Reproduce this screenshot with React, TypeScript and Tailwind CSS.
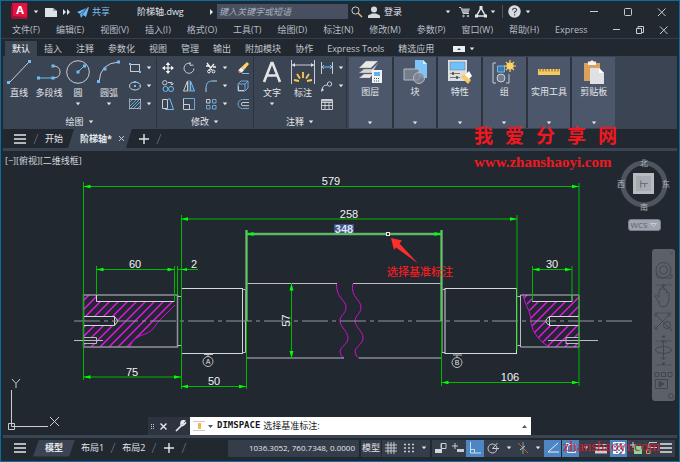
import type { ReactNode } from "react";

const menus = ["文件(F)", "编辑(E)", "视图(V)", "插入(I)", "格式(O)", "工具(T)", "绘图(D)", "标注(N)", "修改(M)", "参数(P)", "窗口(W)", "帮助(H)", "Express"];
const ribbonTabs = ["默认", "插入", "注释", "参数化", "视图", "管理", "输出", "附加模块", "协作", "Express Tools", "精选应用"];

function Icon({ size = 12, children }: { size?: number; children: ReactNode }) {
  return (
    <svg width={size} height={size} viewBox={`0 0 ${size} ${size}`} fill="none" stroke="#c9cdd3" className="block shrink-0" aria-hidden="true">
      {children}
    </svg>
  );
}

function Caret() {
  return (
    <svg width="6" height="4" viewBox="0 0 6 4" className="block shrink-0" aria-hidden="true">
      <path d="M0.8 0.5h4.4L3 3.3z" fill="#e6e8eb" />
    </svg>
  );
}

function Burger() {
  return (
    <Icon size={14}>
      <path d="M1 3h12M1 7h12M1 11h12" stroke="#e4e6e9" strokeWidth="1.4" />
    </Icon>
  );
}

function Plus() {
  return (
    <Icon size={12}>
      <path d="M6 1v10M1 6h10" stroke="#e4e6e9" strokeWidth="1.4" />
    </Icon>
  );
}

function Slash() {
  return (
    <Icon size={10}>
      <path d="M7 0L3 10" stroke="#59616f" />
    </Icon>
  );
}

function TitleBar() {
  return (
    <header className="flex h-[21px] items-center pl-[10px] text-[9px] text-[#e3e6ea]">
      <button aria-label="AutoCAD" className="flex items-center gap-[4px]">
        <svg width="18" height="17" viewBox="0 0 18 17" aria-hidden="true">
          <path d="M1 0h15v14H1z" fill="#e5123f" />
          <path d="M0 3l2-2v12l14 1v2H2l-2-1z" fill="#9e1239" />
          <path d="M16 0l1 3v13h-1z" fill="#7a0f30" />
          <text x="9" y="11" textAnchor="middle" fontSize="11" fontWeight="700" fill="#fff" fontFamily="Inter, sans-serif">A</text>
        </svg>
        <Caret />
      </button>
      <button aria-label="新建" className="ml-[6px]">
        <Icon>
          <path d="M0 2h8l4 3v6H0z" fill="#dfe1e4" stroke="none" />
          <path d="M8 2v3h4z" fill="#9da2aa" stroke="none" />
        </Icon>
      </button>
      <button aria-label="更多" className="ml-[6px]">
        <Icon size={8}>
          <path d="M0 1l3 3-3 3zM4 1l3 3-3 3z" fill="#e4e6e9" stroke="none" />
        </Icon>
      </button>
      <button className="ml-[6px] flex items-center gap-[3px] text-[#7fc0ec]">
        <Icon>
          <path d="M0 6L12 1l-3 10-3-2-2 3-1-4z" fill="#6bbcf2" stroke="none" />
          <path d="M3 8l7-6-5 7" stroke="#1f3d58" strokeWidth="0.7" />
        </Icon>
        共享
      </button>
      <h1 className="ml-[27px] w-[68px]">阶梯轴.dwg</h1>
      <Icon size={8}>
        <path d="M5 1l3 3-3 3z" fill="#e4e6e9" stroke="none" />
      </Icon>
      <input
        aria-label="搜索"
        placeholder="键入关键字或短语"
        className="ml-[4px] h-[15px] w-[131px] bg-[#474f61] px-[2px] italic placeholder:text-[#a9afba]"
      />
      <button aria-label="查找" className="ml-[3px]">
        <Icon>
          <circle cx="4.5" cy="4.5" r="3.6" />
          <path d="M7.2 7.2L11 11" strokeWidth="1.6" stroke="#d9b46b" />
        </Icon>
      </button>
      <button className="ml-[5px] flex items-center gap-[4px]">
        <Icon>
          <circle cx="6" cy="3.6" r="3" fill="#d7dadd" stroke="none" />
          <path d="M0 12V9.5L4 7.5h4l4 2V12z" fill="#d7dadd" stroke="none" />
        </Icon>
        登录
      </button>
      <div className="ml-[43px] flex items-center">
        <Caret />
        <button aria-label="商店" className="ml-[8px]">
          <Icon>
            <path d="M0 1.5h2l2 6h6" />
            <path d="M2.5 2.5H11L9.5 7H4z" fill="#a3a7ad" stroke="none" />
            <circle cx="4.5" cy="10" r="0.8" /><circle cx="9" cy="10" r="0.8" />
          </Icon>
        </button>
        <button aria-label="应用" className="mr-[3px] ml-[4px] flex items-center gap-[3px]">
          <Icon>
            <path d="M6 2L1.5 10h9z" stroke="#e4e6e9" strokeWidth="1.5" />
            <path d="M4.5 0h3v3h-3zM0 8.5h3v3H0zM9 8.5h3v3H9z" fill="#e4e6e9" stroke="none" />
          </Icon>
          <Caret />
        </button>
      </div>
      <div className="ml-[3px] h-[13px] w-px bg-[#4b5362]" />
      <button aria-label="帮助" className="ml-[5px] flex items-center gap-[4px]">
        <svg width="13" height="13" viewBox="0 0 13 13" aria-hidden="true">
          <circle cx="6.5" cy="6.5" r="6.2" fill="#d9dbde" />
          <path d="M4.6 5.2q0-2 2-2t2 1.8q0 1-2 2.2v1M6.6 9.2v1.2" fill="none" stroke="#39414e" strokeWidth="1.1" />
        </svg>
        <Caret />
      </button>
      <div className="mr-[12px] ml-auto flex items-center gap-[24px]">
        <button aria-label="最小化"><Icon size={10}><path d="M1 4.5h8" /></Icon></button>
        <button aria-label="最大化"><Icon size={10}><rect x="1.5" y="1.5" width="7" height="7" rx="1" /></Icon></button>
        <button aria-label="关闭"><Icon size={10}><path d="M1 1.5l7.5 7.5M8.5 1.5L1 9" /></Icon></button>
      </div>
    </header>
  );
}

function MenuBar() {
  return (
    <nav className="flex h-[17px] items-center gap-[16px] border-b border-[#363e4a] pl-[11px] text-[9px] text-[#b9bec6]">
      {menus.map((menu) => (
        <button key={menu} className="shrink-0">{menu}</button>
      ))}
      <div className="mr-[10px] ml-auto flex items-center gap-[14px]">
        <button aria-label="最小化文档"><Icon size={10}><path d="M2 4.5h7" /></Icon></button>
        <button aria-label="还原文档"><Icon size={10}><path d="M1.5 3.5h5v5h-5zM3 3.5v-2h5.5v6h-2" /></Icon></button>
        <button aria-label="关闭文档"><Icon size={10}><path d="M1 1.5l7.5 7.5M8.5 1.5L1 9" /></Icon></button>
      </div>
    </nav>
  );
}

function RibbonTabs() {
  return (
    <nav className="flex h-[17px] items-end pl-[4px] text-[9px] text-[#c3c7ce]">
      {ribbonTabs.map((tab, i) => (
        <button key={tab} className={i === 0 ? "h-[15px] shrink-0 bg-[#3b4453] px-[7px] text-white" : "h-[15px] shrink-0 px-[7px]"}>
          {tab}
        </button>
      ))}
      <button aria-label="最小化功能区" className="ml-[12px] flex h-[15px] items-center gap-[4px]">
        <svg width="12" height="6" viewBox="0 0 12 6" aria-hidden="true">
          <path d="M0 0h12v6H0z" fill="#eceef0" />
          <path d="M4 4l2-2 2 2z" fill="#3b4453" />
        </svg>
        <Caret />
      </button>
    </nav>
  );
}

function BigTool({ label, icon, caret, width }: { label: string; icon: ReactNode; caret?: boolean; width: string }) {
  return (
    <button className={`flex shrink-0 flex-col items-center pt-[3px] ${width}`}>
      {icon}
      <span className="mt-[3px] mb-[3px] h-[12px] leading-[12px] whitespace-nowrap">{label}</span>
      {caret && <Caret />}
    </button>
  );
}

function SmallTool({ label, caret, children }: { label: string; caret?: boolean; children: ReactNode }) {
  return (
    <button aria-label={label} className="flex h-[18px] items-center justify-center gap-[5px]">
      <Icon>{children}</Icon>
      {caret && <Caret />}
    </button>
  );
}

function Panel({ title, className, children }: { title: string; className: string; children: ReactNode }) {
  return (
    <section className={`flex shrink-0 flex-col border-r border-[#2c333f] ${className}`}>
      <div className="flex h-[58px] items-start">{children}</div>
      <button className="flex h-[13px] items-center justify-center gap-[4px] leading-[13px]">
        {title}
        <Caret />
      </button>
    </section>
  );
}

function DrawPanel() {
  return (
    <Panel title="绘图" className="w-[154px]">
      <BigTool
        label="直线"
        width="w-[32px]"
        icon={
          <Icon size={24}>
            <path d="M2 23L22 2" />
            <path d="M0 21h3v3H0zM21 0h3v3h-3z" fill="#6fbdf5" stroke="none" />
          </Icon>
        }
      />
      <BigTool
        label="多段线"
        width="w-[28px]"
        icon={
          <Icon size={24}>
            <path d="M2 18h14" stroke="#6fbdf5" />
            <path d="M16 18q7 0 7-6t-7-6" />
            <path d="M0 16.500h3v3H0zM14.500 16.500h3v3h-3zM14.500 4.500h3v3h-3z" fill="#6fbdf5" stroke="none" />
          </Icon>
        }
      />
      <BigTool
        label="圆"
        width="w-[30px]"
        caret
        icon={
          <Icon size={24}>
            <circle cx="12" cy="12" r="11.3" />
            <path d="M12 12l6-6" stroke="#6fbdf5" />
            <path d="M10.500 10.500h3v3h-3zM17 4.500h3v3h-3z" fill="#6fbdf5" stroke="none" />
          </Icon>
        }
      />
      <BigTool
        label="圆弧"
        width="w-[32px]"
        caret
        icon={
          <Icon size={24}>
            <path d="M2 22Q3 3 22 2" />
            <path d="M0 20h3v3H0zM6.500 7.500h3v3h-3zM20 0.500h3v3h-3z" fill="#6fbdf5" stroke="none" />
          </Icon>
        }
      />
      <div className="flex flex-col pt-[2px] pl-[4px]">
        <SmallTool label="矩形" caret>
          <rect x="1.500" y="2.500" width="9" height="7" />
          <path d="M0 1h2v2H0zM10 9h2v2h-2z" fill="#6fbdf5" stroke="none" />
        </SmallTool>
        <SmallTool label="椭圆" caret>
          <ellipse cx="6" cy="6" rx="5.5" ry="4" />
          <path d="M5 5h2v2H5zM5 1h2v2H5zM10.500 5H12v2h-1.500z" fill="#6fbdf5" stroke="none" />
        </SmallTool>
        <SmallTool label="图案填充" caret>
          <path d="M1 4l3-3M1 8l7-7M1 11L11 1M4 11l7-7M8 11l3-3" stroke="#6fbdf5" strokeWidth="0.8" />
          <path d="M0.500 0.500v11M11.500 0.500v11M0.500 1.500h11M0.500 10.500h11" strokeWidth="0.7" />
        </SmallTool>
      </div>
    </Panel>
  );
}

function ModifyPanel() {
  return (
    <Panel title="修改" className="w-[97px]">
      <div className="grid grid-cols-[21px_22px_33px_19px] pt-[2px]">
        <SmallTool label="移动">
          <path d="M6 1v10M1 6h10" stroke="#f2f3f5" strokeWidth="1.2" />
          <path d="M6 0l2.300 3H3.700zM6 12l2.300-3H3.700zM0 6l3-2.300v4.600zM12 6L9 3.700v4.600z" fill="#f2f3f5" stroke="none" />
        </SmallTool>
        <SmallTool label="旋转">
          <path d="M7.500 1.500A5 5 0 1 0 11 6.500M7 0v3.200h3.500" />
        </SmallTool>
        <SmallTool label="修剪" caret>
          <path d="M2 1l5 7M9 2L4 8M1 4h4M8 5h3" stroke="#f2f3f5" strokeWidth="1.300" />
          <circle cx="4" cy="9.500" r="1.400" stroke="#f2f3f5" /><circle cx="8.500" cy="9.500" r="1.400" stroke="#f2f3f5" />
        </SmallTool>
        <SmallTool label="删除">
          <path d="M10 0l2 2-5 6-3-2.500z" fill="#ffd06b" stroke="none" />
          <path d="M4 5.500L7 8l-2 2.500H2L1.500 8z" fill="#f4f4f4" stroke="none" />
          <path d="M1.500 8l3 2.500H2z" fill="#ef6a4a" stroke="none" />
          <path d="M5 11.500h7" stroke="#6fbdf5" />
        </SmallTool>
        <SmallTool label="复制">
          <circle cx="2.800" cy="2.800" r="2.200" /><circle cx="3.500" cy="9" r="2.500" stroke="#6fbdf5" /><circle cx="9" cy="9" r="2.500" stroke="#6fbdf5" />
          <path d="M6 2.500h4v2M8.500 3.500L10 5l1.500-1.500" />
        </SmallTool>
        <SmallTool label="镜像">
          <path d="M4.500 1v10h-4z" /><path d="M7.500 1v10h4z" stroke="#6fbdf5" fill="#385f80" />
          <path d="M6 0v12" strokeWidth="0.6" />
        </SmallTool>
        <SmallTool label="圆角" caret>
          <path d="M1 12V8M7 1h5" /><path d="M1 8q0-7 6-7" stroke="#6fbdf5" />
        </SmallTool>
        <SmallTool label="分解">
          <path d="M1 4h7v7H1zM1 4l3-3h7v7l-3 3M8 4l3-3" stroke="#6fa9d6" />
          <path d="M1.500 6v4.500H7" />
        </SmallTool>
        <SmallTool label="拉伸">
          <path d="M0.500 1.500h5v9h-5z" /><path d="M6 1l2 0 3.500 10.500H3" stroke="#6fbdf5" />
        </SmallTool>
        <SmallTool label="缩放">
          <path d="M0.500 0.500h11v11h-5" stroke="#6fa9d6" /><path d="M0.500 0.500v11h6v-5h-6" />
        </SmallTool>
        <SmallTool label="阵列" caret>
          <path d="M1.500 1.500h3.500v3.500H1.500z" /><path d="M7.500 1.500H11v3.500H7.500zM1.500 7.500H5V11H1.500zM7.500 7.500H11V11H7.500z" stroke="#6fa9d6" />
        </SmallTool>
        <SmallTool label="偏移">
          <path d="M12 1.500H5.500a4.500 4.500 0 0 0 0 9H12" stroke="#6fa9d6" /><path d="M12 4.500H6a1.600 1.600 0 0 0 0 3.200h6" />
        </SmallTool>
      </div>
    </Panel>
  );
}

function AnnotatePanel() {
  return (
    <Panel title="注释" className="w-[93px]">
      <BigTool
        label="文字"
        width="w-[36px]"
        caret
        icon={
          <Icon size={24}>
            <path d="M4 22l7.500-19h1L20 22M6.500 15.500h11" stroke="#e3e4e6" strokeWidth="2.600" />
          </Icon>
        }
      />
      <BigTool
        label="标注"
        width="w-[26px]"
        icon={
          <Icon size={24}>
            <path d="M0.500 0v24M23.500 0v24M1 5h22" />
            <path d="M1 5l3-2v4zM23 5l-3-2v4z" fill="#dcdfe3" stroke="none" />
            <path d="M12 12v6M6 14l3 4.500M18 14l-3 4.500M3 20l5 1M21 20l-5 1" stroke="#ffc94f" strokeWidth="1.800" />
          </Icon>
        }
      />
      <div className="flex flex-col items-start pt-[2px] pl-[5px]">
        <SmallTool label="线性" caret>
          <path d="M0.500 0v12M11.500 0v12" /><path d="M1 5h10M3 3L1 5l2 2M9 3l2 2-2 2" stroke="#6fbdf5" />
        </SmallTool>
        <SmallTool label="引线" caret>
          <path d="M1 11q0-6 5-6" /><circle cx="8.500" cy="4" r="2.200" /><path d="M0 12l1-4 2 2z" fill="#dcdfe3" stroke="none" />
        </SmallTool>
        <SmallTool label="表格">
          <path d="M0.500 1.500h11v10h-11zM0.500 4.500h11M0.500 7.500h11M4 4.500v7M8 4.500v7" />
          <path d="M1 2h10v1.500H1z" fill="#c9cdd3" stroke="none" />
        </SmallTool>
      </div>
    </Panel>
  );
}

const panelCards = [
  {
    name: "图层",
    icon: (
      <Icon size={24}>
        <path d="M1 8L8 1h12l-7 7z" fill="#e8e8e8" stroke="#777" strokeWidth="0.400" />
        <path d="M1 13l5-4h8l6-6-6 10z" fill="#d6d6d6" stroke="#777" strokeWidth="0.400" />
        <path d="M1 18l5-4h9l-3 4z" fill="#e8e8e8" stroke="#777" strokeWidth="0.400" />
        <path d="M14 10h10v13H14z" fill="#f2f2f2" stroke="none" />
        <path d="M16 12h6v4h-6z" fill="#5ab2f0" stroke="none" />
        <path d="M16 18.500h6M16 21h6" stroke="#555" strokeDasharray="1 1" />
      </Icon>
    ),
  },
  {
    name: "块",
    icon: (
      <Icon size={24}>
        <path d="M12 0h8l4 4v14H12z" fill="#7cc5f8" stroke="none" />
        <path d="M20 0v4h4z" fill="#d8edfb" stroke="none" />
        <path d="M1 9h15v11H1z" fill="#747d8b" stroke="#b4bac3" />
        <circle cx="16" cy="18" r="5.500" fill="#7f8795" fillOpacity="0.8" stroke="#b4bac3" />
      </Icon>
    ),
  },
  {
    name: "特性",
    icon: (
      <Icon size={24}>
        <path d="M0 0h19v21H0z" fill="#dedede" stroke="none" />
        <path d="M2 2h15v8H2z" fill="#6ec1fa" stroke="#777" strokeWidth="0.500" />
        <path d="M2 13.500h10M2 17.500h10" stroke="#777" />
        <path d="M5 12v3M9 16v3" stroke="#444" strokeWidth="1.500" />
        <path d="M13 17l3-3 7 6-3 4z" fill="#f8c965" stroke="none" />
        <path d="M17 15l4-4 3 5-3 3z" fill="#fff" stroke="none" />
      </Icon>
    ),
  },
  {
    name: "组",
    icon: (
      <Icon size={24}>
        <path d="M4 3H1v20h3M14 23h3v-9" />
        <path d="M5.500 6h7v6h-7z" fill="#3f79a5" stroke="#70b7e8" />
        <circle cx="9" cy="18" r="4" fill="#747d8b" />
        <circle cx="18" cy="6" r="3.600" fill="#ffd364" stroke="none" />
        <path d="M18 0v12M12 6h12M14 2l8 8M22 2l-8 8" stroke="#ffd364" strokeWidth="1.200" />
      </Icon>
    ),
  },
  {
    name: "实用工具",
    icon: (
      <Icon size={24}>
        <path d="M1 9h22v6H1z" fill="#f6c862" stroke="none" />
        <path d="M3 9v2.500M6 9v2.500M9 9v2.500M12 9v2.500M15 9v2.500M18 9v2.500M21 9v2.500" stroke="#59482b" strokeWidth="0.800" />
      </Icon>
    ),
  },
  {
    name: "剪贴板",
    icon: (
      <Icon size={24}>
        <path d="M2 3h16v18H2z" fill="#d9a15b" stroke="none" />
        <path d="M6 1.500h2.500q1.500-2.500 3 0H14V5H6z" fill="#f4f4f4" stroke="none" />
        <path d="M8 8h9l5 5v11H8z" fill="#e0e1e3" stroke="none" />
        <path d="M17 8v5h5z" fill="#fff" stroke="none" />
      </Icon>
    ),
  },
];

function Ribbon() {
  return (
    <div className="mx-[2px] flex h-[73px] bg-[#3b4453] pt-px pb-px text-[9px] text-[#e3e6ea]">
      <DrawPanel />
      <ModifyPanel />
      <AnnotatePanel />
      <div className="ml-[2px] grid w-[266px] grid-cols-6 gap-[2px] bg-[#2c333f]">
        {panelCards.map((card) => (
          <button key={card.name} className="flex flex-col items-center bg-[#4c576b] pt-[3px] pb-[3px]">
            {card.icon}
            <span className="mt-[2px] leading-[12px] whitespace-nowrap">{card.name}</span>
            <span className="mt-auto"><Caret /></span>
          </button>
        ))}
      </div>
    </div>
  );
}

function DocumentTabs() {
  return (
    <nav className="flex h-[19px] items-center pl-[12px] text-[9px] text-[#e3e6ea]">
      <button aria-label="菜单"><Burger /></button>
      <span className="ml-[4px]"><Slash /></span>
      <button className="ml-[4px]">开始</button>
      <div className="ml-[5px] flex h-full items-center gap-[6px] bg-[#3b4453] pr-[7px] pl-[12px] font-bold [clip-path:polygon(6px_0,100%_0,calc(100%-6px)_100%,0_100%)]">
        <button>阶梯轴*</button>
        <button aria-label="关闭阶梯轴"><Icon size={7}><path d="M1 1l5 5M6 1L1 6" /></Icon></button>
      </div>
      <button aria-label="新图形" className="ml-[6px]"><Plus /></button>
      <span className="ml-[4px]"><Slash /></span>
    </nav>
  );
}

type Dim = { x1: number; x2: number; y: number; text: string; tx: number };
const dims: Dim[] = [
  { x1: 83.5, x2: 579, y: 186.5, text: "579", tx: 331 },
  { x1: 181, x2: 517, y: 219, text: "258", tx: 349 },
  { x1: 96.5, x2: 174.5, y: 269.5, text: "60", tx: 135 },
  { x1: 532.5, x2: 572, y: 269.5, text: "30", tx: 552 },
  { x1: 83.5, x2: 181, y: 377, text: "75", tx: 132 },
  { x1: 181, x2: 246, y: 386.5, text: "50", tx: 214 },
  { x1: 441.5, x2: 579, y: 382.5, text: "106", tx: 510 },
];

const hatchLines = Array.from({ length: 20 }, (_, i) => i * 9);

function Drawing() {
  return (
    <svg viewBox="1 151 678 283" className="block w-full" fill="none" fontFamily="Liberation Sans, Arial, sans-serif" role="img" aria-label="阶梯轴">
      <defs>
        <clipPath id="leftHatch">
          <path d="M83 295H96.500V301.500H175V305L157 323Q152 332 145 334Q132 338 130 347H83V343H97V338H83V325H114L118 321L114 316.500H83z" />
        </clipPath>
        <clipPath id="rightHatch">
          <path d="M523 295H532.500V301.500H572V295H579V316.500H549L545 321L549 325H579V338H566V343H579V347H549Q534 337 532 327Q530 304 525 302z" />
        </clipPath>
      </defs>

      <g clipPath="url(#leftHatch)">
        {hatchLines.map((x) => <path key={x} d={`M${x + 36} 348L${x + 90} 294`} stroke="#e814e8" strokeWidth="1.4" />)}
      </g>
      <g clipPath="url(#rightHatch)">
        {hatchLines.map((x) => <path key={x} d={`M${x + 474} 348L${x + 528} 294`} stroke="#e814e8" strokeWidth="1.4" />)}
      </g>
      <g stroke="#cf10cf">
        <path d="M175 305L157 323Q152 332 145 334Q132 338 130 347" />
        <path d="M523 295Q526 306 529 311Q531 316 531 323Q534 338 549 347" />
        <path d="M336.500 284C336 298 346 300 346 307S340 315 340 321S348 331 348 338S340 346 340 352Q341 357 344 358" />
        <path d="M352.500 284C351 298 361 300 361 307S355 315 355 321S363 331 363 338S355 346 355 352Q356 357 359 358" />
      </g>

      <g stroke="#b9bcc0">
        <path d="M83.500 295H177.500V347H83.500z" stroke="#8f9397" strokeWidth="1.500" />
        <path d="M96.500 295V301.500H174.500V295" stroke="#d6d8da" />
        <path d="M177.500 296.500H181.500M177.500 345.500H181.500" />
        <path d="M83.500 316.500H114.500V325.500H83.500M114.500 316.500L118 321L114.500 325.500" stroke="#d6d8da" />
        <path d="M83.500 337.500H96.500V343.500H83.500M74 340.500H103" />
        <rect x="181.500" y="288.500" width="61" height="65" stroke="#d6d8da" />
        <path d="M242.500 289.500H245.500V352.500H242.500" />
        <path d="M246 283.500H337M353 283.500H441M246 358H344M359 358H441M441.500 283.500V358" />
        <path d="M445 289.500H442V352.500H445" />
        <rect x="445" y="288.500" width="71.500" height="65" stroke="#d6d8da" />
        <path d="M516.500 296.500H520.500M516.500 345.500H520.500" />
        <path d="M579 295H520.500V347H579z" />
        <path d="M532.500 295V301.500H572V295" stroke="#d6d8da" />
        <path d="M579 316.500H549.500V325.500H579M549.500 316.500Q542 321 549.500 325.500" stroke="#d6d8da" />
        <path d="M579 337.500H566V343.500H579M548 340.500H598" />
        <path d="M74 321H634" stroke="#94989d" strokeDasharray="26 4 4 4" />
        <circle cx="208" cy="361.500" r="5" /><path d="M208 354.500V357M204 354.500H213" />
        <circle cx="457" cy="362.500" r="5" /><path d="M457 355V357.500M453 355H462" />
      </g>
      <g fill="#e0e2e4" fontSize="7" textAnchor="middle">
        <text x="208" y="364">A</text>
        <text x="457" y="365">B</text>
      </g>

      <g stroke="#00b800">
        <path d="M83.500 182V380M181.500 215V389M246.500 230V389M517 215V350M579 183V386M441.500 230V386" />
        <path d="M96.500 266V295M174.500 266V302M177.500 266V295M532.500 266V301M572 266V301" />
        <path d="M181 269.500H198M177 269.500h4M291.500 283V358" />
      </g>
      <path d="M291.500 283.500l-2 7h4zM291.500 358l-2-7h4zM181 269.500l6-1.500v3z" fill="#00ff00" />
      {dims.map((d) => (
        <g key={d.text}>
          <path d={`M${d.x1} ${d.y}H${d.x2}`} stroke="#00b800" />
          <path d={`M${d.x1} ${d.y}l7-1.700v3.400zM${d.x2} ${d.y}l-7-1.700v3.400z`} fill="#00ff00" />
          <text x={d.tx} y={d.y - 1.5} textAnchor="middle" fontSize="11" fill="#f2f3f4">{d.text}</text>
        </g>
      ))}
      <text x="194" y="268" textAnchor="middle" fontSize="11" fill="#f2f3f4">2</text>
      <text transform="translate(290 320.500) rotate(-90)" textAnchor="middle" fontSize="11" fill="#f2f3f4">57</text>

      {/* selected dimension */}
      <path d="M246.500 230V321M441.500 230V321M246 234H442" stroke="#6d9c74" strokeWidth="2.500" />
      <path d="M246.500 230V321M441.500 230V321M246 234H442" stroke="#45d850" />
      <path d="M246.500 234l7-2v4zM441.500 234l-7-2v4z" fill="#00ff00" />
      <rect x="334" y="224" width="20" height="9" fill="#3d5285" />
      <text x="344" y="232.500" textAnchor="middle" fontSize="11" fontWeight="700" fill="#dfe5f2">348</text>
      <rect x="386.500" y="232.500" width="3" height="3" fill="#212830" stroke="#e8e8e8" />
      <path d="M391 238L402 240.500L399.500 243.500L418 263.500L396 247.500L394 250z" fill="#ff2e2e" />
      <text x="387" y="276" fontSize="11" fontWeight="500" fill="#ee1c24" fontFamily="Noto Sans CJK SC, sans-serif">选择基准标注</text>

      <g stroke="#c9ccd0">
        <path d="M11.500 390V426.500H48M8.500 423.500h6v6h-6z" />
        <path d="M12 379l4 4.500 4-4.500M16 383.500V388M50 417l9 9M59 417l-9 9" />
      </g>
    </svg>
  );
}

function ViewCube() {
  return (
    <div className="absolute top-[6px] right-[8px] flex flex-col items-center gap-[8px]">
      <svg width="54" height="54" viewBox="0 0 54 54" fontSize="8" textAnchor="middle" fill="#b4b8bd" fontFamily="Noto Sans CJK SC, sans-serif" aria-label="视图方位">
        <circle cx="27" cy="27" r="21" fill="none" stroke="#4e555f" strokeWidth="5" />
        <path d="M16 16h21v21H16z" fill="#b9bbbe" />
        <path d="M19 19h15v15H19z" fill="#a7acb3" />
        <text x="27" y="30" fill="#3b4453" transform="rotate(90 27 27)">上</text>
        <text x="27" y="9">北</text>
        <text x="27" y="53">南</text>
        <text x="4" y="30">西</text>
        <text x="49" y="30">东</text>
      </svg>
      <button className="flex h-[12px] w-[33px] items-center justify-center gap-[3px] rounded-[3px] border border-[#777d89] bg-[#a0a4b0] text-[8px] text-[#5c616d]">
        WCS
        <svg width="7" height="4" viewBox="0 0 7 4" aria-hidden="true"><path d="M0.500 0.500h6l-3 3z" fill="none" stroke="#c7cad2" /></svg>
      </button>
    </div>
  );
}

function NavigationBar() {
  return (
    <div className="absolute top-[98px] right-[4px] flex w-[23px] rounded-[3px] bg-[#5c6067]">
      <svg width="23" height="152" viewBox="0 0 23 152" fill="none" stroke="#42474f" aria-label="导航栏">
        <path d="M18 3l3 3M21 3l-3 3M3 36h17M3 64h17M3 92h17M3 116h17" strokeWidth="0.600" />
        <circle cx="11.500" cy="21" r="7.500" /><circle cx="11.500" cy="21" r="4" /><path d="M17 26h3v3H6q-2-2-2-5" />
        <path d="M7 53l-4-6q1-2 4 1V41q2-2 2 0v-2q2-2 3 0v2q2-2 2.500 0v3q2-2 2.500 0v8q-2 6-6 6t-4-5z" />
        <path d="M4 66l13 13M17 66L4 79M3 68v-3h3M15 65h3v3M3 77v3h3" /><circle cx="15" cy="76" r="3.500" /><path d="M17 78l3 4" />
        <ellipse cx="11.500" cy="101" rx="8" ry="3.500" /><path d="M11.500 92v18M9 94l2.500-3 2.500 3M9 108l2.500 3 2.500-3" />
        <path d="M3 123.500h4v4H3zM9.500 123.500h4v4h-4zM16 123.500h4v4h-4zM3.500 130.500h12v9h-12z" />
        <path d="M7 132l5 3-5 3zM10 36h3l-1.500 2zM10 87h3l-1.500 2zM10 114h3l-1.500 2z" fill="#42474f" />
        <circle cx="19" cy="147" r="2.500" />
      </svg>
    </div>
  );
}

function CommandLine() {
  return (
    <div className="absolute bottom-0 left-[147px] flex h-[18px] w-[382px] items-center bg-[#2d3440]">
      <div className="flex w-[42px] shrink-0 items-center gap-[5px] pl-[2px]">
        <Icon size={5}><path d="M1.500 0v5M3.500 0v5" stroke="#c4c8ce" strokeDasharray="1 1" /></Icon>
        <button aria-label="关闭命令行"><Icon size={7}><path d="M0.500 0.500l6 6M6.500 0.500l-6 6" stroke="#e8eaec" strokeWidth="1.400" /></Icon></button>
        <button aria-label="自定义" className="ml-[3px]">
          <Icon><path d="M1 11l6-6M11 2.500L9 4.500 7.500 3 9.500 1Q6 0 6 4t5-1.500z" stroke="#e8eaec" strokeWidth="1.700" /></Icon>
        </button>
      </div>
      <div className="flex h-full flex-1 items-center bg-white pr-[4px] pl-[3px]">
        <Icon>
          <path d="M0 1.500h2M10 1.500h2M0 10.500h2M10 10.500h2M2 1.500h8M2 10.500h8" stroke="#c8cacd" />
          <path d="M5 3h3v6H5z" fill="#f1b750" stroke="none" />
        </Icon>
        <svg width="5" height="3" viewBox="0 0 5 3" className="ml-[3px]" aria-hidden="true"><path d="M0 0h5L2.500 3z" fill="#555" /></svg>
        <label htmlFor="command" className="ml-[4px] flex gap-[3px] text-[9px] whitespace-nowrap text-[#16181b]">
          <b className="font-['DejaVu_Sans_Mono','Liberation_Mono',monospace]">DIMSPACE</b>
          选择基准标注:
        </label>
        <input id="command" className="h-full min-w-0 flex-1 outline-none" />
        <button aria-label="历史记录"><svg width="5" height="3" viewBox="0 0 5 3" aria-hidden="true"><path d="M0 3h5L2.500 0z" fill="#555" /></svg></button>
      </div>
    </div>
  );
}

function StatusButton({ label, width = "w-[18px]", active, children }: { label: string; width?: string; active?: boolean; children: ReactNode }) {
  return (
    <button aria-label={label} className={`flex h-[17px] shrink-0 items-center justify-center ${width} ${active ? "bg-[#4e86c4]" : "bg-[#353d4a]"}`}>
      {children}
    </button>
  );
}

function StatusBar() {
  return (
    <footer className="relative flex h-[23px] items-center pr-[4px] pb-[3px] pl-[12px] text-[9px] text-[#e3e6ea]">
      <button aria-label="布局菜单"><Burger /></button>
      <button className="ml-[6px] h-[17px] bg-[#3b4453] px-[12px] font-bold [clip-path:polygon(6px_0,100%_0,calc(100%-6px)_100%,0_100%)]">模型</button>
      <button className="ml-[6px]">布局1</button>
      <span className="ml-[4px]"><Slash /></span>
      <button className="ml-[4px]">布局2</button>
      <span className="ml-[4px]"><Slash /></span>
      <button aria-label="新建布局" className="ml-[4px]"><Plus /></button>
      <span className="ml-[4px]"><Slash /></span>
      <div className="ml-auto flex items-center">
        <div className="mr-[2px] flex h-[17px] w-[131px] items-center justify-end bg-[#353d4a] pr-[4px] text-[8px] whitespace-nowrap">1036.3052, 760.7348, 0.0000</div>
        <button className="mr-px h-[17px] w-[20px] bg-[#353d4a] text-center whitespace-nowrap">模型</button>
        <StatusButton label="栅格"><Icon><path d="M3 0v12M6 0v12M9 0v12M0 3h12M0 6h12M0 9h12" /></Icon></StatusButton>
        <StatusButton label="捕捉"><Icon><path d="M1 2.500h10M1 6h10M1 9.500h10" strokeWidth="1.600" strokeDasharray="2 2" /></Icon></StatusButton>
        <StatusButton label="捕捉设置" width="w-[12px]"><Caret /></StatusButton>
        <div className="w-[2px]" />
        <StatusButton label="推断约束" width="w-[17px]"><Icon><path d="M6 1.500h5v5H6z" /><path d="M0 7h7v4H0z" fill="#d5d8dc" stroke="none" /><path d="M6.500 2v6" /></Icon></StatusButton>
        <StatusButton label="动态输入" width="w-[17px]"><Icon><path d="M3 1v6M0 4h6" /><path d="M5 7h7v3H5z" fill="#c9cdd3" stroke="none" /></Icon></StatusButton>
        <StatusButton label="正交" active><Icon><path d="M1.500 0v11H12M1.500 7.500h4V11" stroke="#c9e0f7" /></Icon></StatusButton>
        <StatusButton label="极轴"><Icon><circle cx="5.500" cy="6.500" r="4.500" /><path d="M5.500 6.500L10.500 1M5.500 6.500H12" /></Icon></StatusButton>
        <StatusButton label="极轴设置" width="w-[13px]"><Caret /></StatusButton>
        <StatusButton label="等轴测" width="w-[16px]"><Icon><path d="M6 0v12" stroke="#61b872" /><path d="M1 1l10 10" stroke="#bf6060" /><path d="M8 4L3 8" /></Icon></StatusButton>
        <StatusButton label="等轴测设置" width="w-[13px]"><Caret /></StatusButton>
        <StatusButton label="对象追踪" width="w-[17px]" active><Icon><path d="M11 1L1 10h11" stroke="#e6f1fb" /></Icon></StatusButton>
        <div className="w-px" />
        <StatusButton label="对象捕捉" width="w-[17px]" active><Icon><path d="M2.500 2.500h8v8h-8z" stroke="#e6f1fb" /><path d="M1 1h3v3H1z" fill="#e6f1fb" stroke="none" /></Icon></StatusButton>
        <StatusButton label="捕捉选项" width="w-[13px]"><Caret /></StatusButton>
        <StatusButton label="线宽"><Icon><path d="M0 2.500h12" /><path d="M0 6h12" strokeWidth="2" /><path d="M0 10h12" strokeWidth="3" /></Icon></StatusButton>
        <StatusButton label="透明度" width="w-[17px]" active>
          <Icon><path d="M0.500 0.500h11v11h-11z" stroke="#fff" /><path d="M1 2.500h10M1 6.500h10M1 10h10" stroke="#fff" strokeWidth="2" strokeDasharray="2 2" /><path d="M3 4.500h8M3 8.500h8" stroke="#fff" strokeWidth="2" strokeDasharray="2 2" /></Icon>
        </StatusButton>
        <StatusButton label="选择循环"><Icon><path d="M4 4h8v8H4z" fill="#7fd99a" stroke="none" /><path d="M3 0v6M0 3h6" /></Icon></StatusButton>
        <StatusButton label="注释监视器" width="w-[12px]"><Icon><path d="M4 0.500h8M4 5.500h8M4 1v5" /><path d="M1.500 8h3.500v3.500H1.500z" stroke="#d39a67" /></Icon></StatusButton>
        <StatusButton label="自定义状态栏"><Burger /></StatusButton>
      </div>
      <p className="pointer-events-none absolute top-[-2px] right-[19px] font-['Liberation_Serif',serif] text-[15px] leading-[20px] text-[#d32030]">zhanshaoyi.com</p>
    </footer>
  );
}

function Watermark() {
  return (
    <div className="pointer-events-none absolute top-[124px] left-[473px] text-[#f01820]">
      <p className="flex gap-[12px] text-[19px] leading-[22px] font-bold">
        {["我", "爱", "分", "享", "网"].map((char) => <span key={char}>{char}</span>)}
      </p>
      <p className="mt-[6px] font-['Liberation_Serif',serif] text-[15px] leading-[18px] font-bold">www.zhanshaoyi.com</p>
    </div>
  );
}

export default function App() {
  return (
    <div className="relative flex min-h-screen flex-col overflow-hidden border border-[#0b6d9c] bg-[#212830] font-['Open_Sans','Noto_Sans_CJK_SC',sans-serif]">
      <TitleBar />
      <MenuBar />
      <RibbonTabs />
      <Ribbon />
      <DocumentTabs />
      <div className="mx-[2px] h-[3px] bg-[#3b4453]" />
      <main className="relative flex-1">
        <p className="absolute top-[3px] left-[4px] text-[9px] leading-[13px] text-[#d4d7db]">[−][俯视][二维线框]</p>
        <Drawing />
        <ViewCube />
        <NavigationBar />
        <CommandLine />
      </main>
      <div className="mx-[2px] h-[3px] bg-[#3b4453]" />
      <StatusBar />
      <Watermark />
    </div>
  );
}
